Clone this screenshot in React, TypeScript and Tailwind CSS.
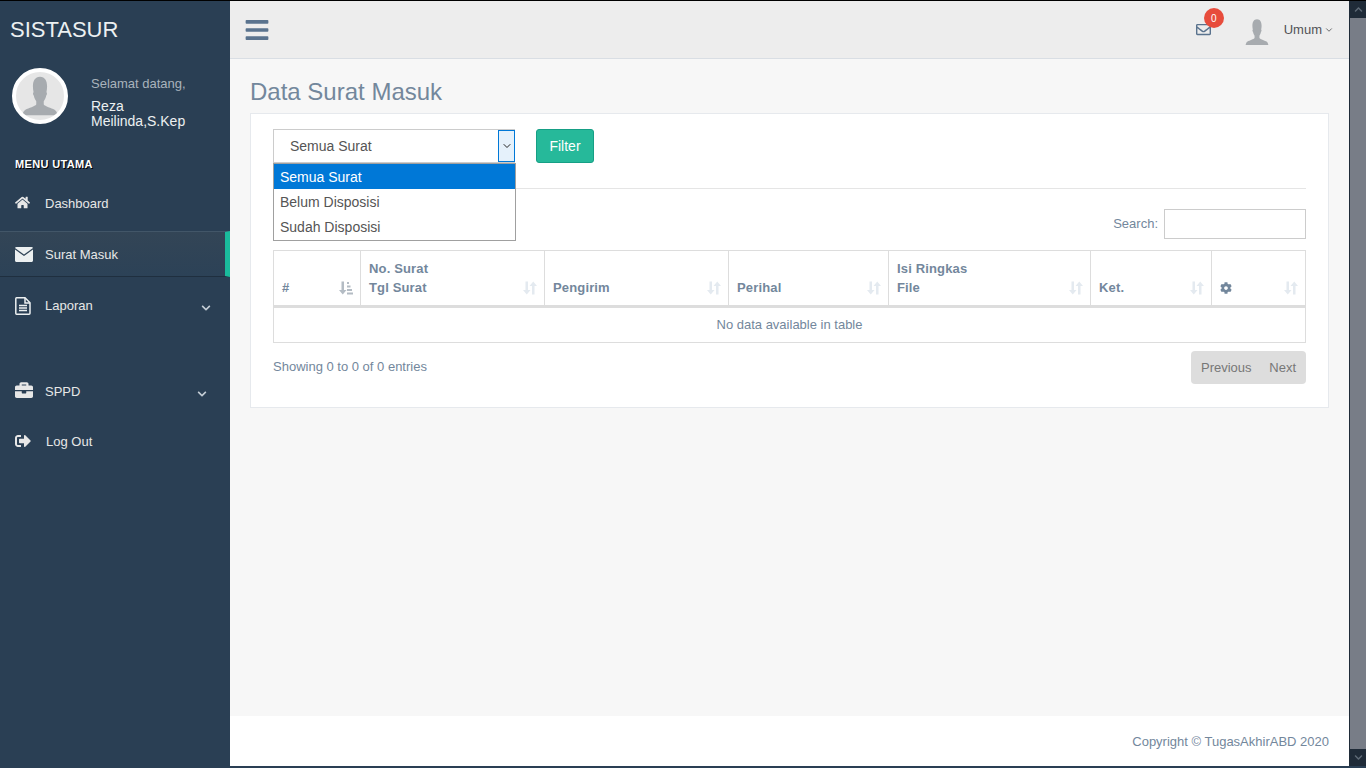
import { ChevronDown } from 'lucide-react';
import {
  FaBars,
  FaBriefcase,
  FaChevronDown,
  FaChevronUp,
  FaCog,
  FaHome,
  FaRegEnvelope,
  FaSignOutAlt,
} from 'react-icons/fa';

const columns = [
  { width: 'w-[87px]', top: '', bottom: '#', active: true },
  { width: 'w-[184px]', top: 'No. Surat', bottom: 'Tgl Surat' },
  { width: 'w-[184px]', top: '', bottom: 'Pengirim' },
  { width: 'w-[160px]', top: '', bottom: 'Perihal' },
  { width: 'w-[202px]', top: 'Isi Ringkas', bottom: 'File' },
  { width: 'w-[121px]', top: '', bottom: 'Ket.' },
  { width: 'flex-1', top: '', bottom: 'gear' },
];

function Avatar({ width, height }: { width: number; height: number }) {
  return (
    <svg width={width} height={height} viewBox="0 0 48 48" preserveAspectRatio="none">
      <path
        d="M24 5c-6 0-8.500 4.500-8.500 10 0 2 .3 4 .8 6-1 .5-.8 2.500.2 3.500.6 2.500 1.800 4.500 3 6v3.500c-1.500 2-9 3.500-13 5.500-2 1-3 3-3.500 5.500h42c-.5-2.500-1.500-4.500-3.500-5.500-4-2-11.500-3.500-13-5.500v-3.500c1.200-1.500 2.400-3.500 3-6 1-1 1.200-3 .2-3.500.5-2 .8-4 .8-6C32.500 9.500 30 5 24 5z"
        fill="#A7ABAF"
      />
    </svg>
  );
}

function SortArrows() {
  return (
    <svg width="14" height="14" viewBox="0 0 14 14" fill="#E4EAF0">
      <path d="M2.500 .5H5v8.500h2.500l-3.750 4.500L0 9h2.500z" />
      <path d="M9 13.500h2.500V5H14L10.250 .5 6.500 5H9z" />
    </svg>
  );
}

function SortActive() {
  return (
    <svg width="14" height="14" viewBox="0 0 14 14" fill="#B4BCC4">
      <path d="M2.500 .5H5v8.500h2.500l-3.750 4.500L0 9h2.500z" />
      <path d="M8 1h2v2H8zM8 4.500h3.500v2H8zM8 8h5v2H8zM8 11.500h6v2H8z" />
    </svg>
  );
}

function MailIcon() {
  return (
    <svg width="18" height="15" viewBox="0 0 18 15" fill="#ECF0F1">
      <path d="M1.500 0h15c.7 0 1.300.4 1.500 1L9 7.500 0 1c.2-.6.8-1 1.500-1z" />
      <path d="M0 2.600l9 6.500 9-6.500V13.500c0 .8-.7 1.500-1.500 1.500h-15C.7 15 0 14.300 0 13.500z" />
    </svg>
  );
}

function FileIcon() {
  return (
    <svg width="16" height="18" viewBox="0 0 16 18" fill="none" stroke="#ECF0F1" strokeWidth="1.500">
      <path d="M1.500 .8h8.500l5 5v10.400c0 .6-.4 1-1 1H1.500c-.4 0-.7-.4-.7-1V1.800c0-.6.3-1 .7-1z" />
      <path d="M10 1v5h5" />
      <path d="M4 8.500h8M4 11h8M4 13.500h8" />
    </svg>
  );
}

function NavItem({
  icon,
  label,
  arrowClass,
  className,
  labelClass,
}: {
  icon: React.ReactNode;
  label: string;
  arrowClass?: string;
  className?: string;
  labelClass?: string;
}) {
  return (
    <div className={`relative flex items-center text-[13px] leading-[20px] text-[#E7E7E7] ${className ?? ''}`}>
      <span className="flex w-[45px] justify-start pl-[15px]">{icon}</span>
      <span className={labelClass}>{label}</span>
      {arrowClass && <FaChevronDown className={`absolute top-[7px] text-[10px] text-[#C4CDD5] ${arrowClass}`} />}
    </div>
  );
}

function Sidebar() {
  return (
    <aside className="flex w-[230px] shrink-0 flex-col bg-[#2A3F54]">
      <div className="pl-[10px] pt-[16px] text-[22px] leading-[26px] text-[#ECF0F1]">SISTASUR</div>

      <div className="mt-[25px] flex pl-[12px]">
        <div className="flex h-[56px] w-[56px] items-end justify-center overflow-hidden rounded-full border-[4px] border-white bg-[#E6E6E6] pb-[2px]">
          <Avatar width={40} height={46} />
        </div>
        <div className="ml-[23px] w-[110px] pt-[8px]">
          <div className="text-[13px] leading-[16px] text-[#A9B3BC]">Selamat datang,</div>
          <div className="mt-[7px] text-[14px] leading-[15px] text-[#ECF0F1]">Reza Meilinda,S.Kep</div>
        </div>
      </div>

      <div className="mt-[27px] pl-[15px] text-[11px] font-bold leading-[16px] tracking-[0.35px] text-white [text-shadow:1px_1px_#000]">
        MENU UTAMA
      </div>

      <NavItem className="mt-[22px]" icon={<FaHome className="mt-[-3px] text-[15px]" />} label="Dashboard" />
      <NavItem
        className="mt-[17px] h-[46px] border-y border-t-[#425668] border-b-[#1F2F3F] border-r-[5px] border-r-[#1ABB9C] bg-gradient-to-b from-[#334556] to-[#2C4257] pt-[2px]"
        icon={<span className="mt-[-2px] flex"><MailIcon /></span>}
        label="Surat Masuk"
      />
      <NavItem
        className="mt-[19px]"
        icon={<span className="mt-[-1px] flex"><FileIcon /></span>}
        label="Laporan"
        arrowClass="left-[201px]"
      />
      <NavItem
        className="mt-[66px]"
        icon={<FaBriefcase className="mt-[-4px] text-[18px]" />}
        label="SPPD"
        arrowClass="left-[197px]"
      />
      <NavItem
        className="mt-[30px]"
        icon={<FaSignOutAlt className="mt-[-3px] text-[16px]" />}
        label="Log Out"
        labelClass="ml-[1px]"
      />
    </aside>
  );
}

function TopBar() {
  return (
    <header className="flex h-[58px] shrink-0 items-center border-b border-[#D9DEE4] bg-[#EDEDED] pl-[14px]">
      <FaBars className="text-[26px] text-[#5A738E]" />
      <div className="ml-auto flex items-center text-[13px] text-[#515356]">
        <span className="relative flex">
          <FaRegEnvelope className="text-[15px] text-[#5A738E]" />
          <span className="absolute left-[8px] top-[-14px] flex h-[20px] w-[20px] items-center justify-center rounded-full bg-[#E74C3C] text-[10px] text-white">
            0
          </span>
        </span>
        <span className="ml-[33px] mt-[4px] flex">
          <Avatar width={26} height={31} />
        </span>
        <span className="ml-[14px] mt-[1px]">Umum</span>
        <ChevronDown size={10} strokeWidth={2} className="ml-[2px] mr-[15px] mt-[1px]" />
      </div>
    </header>
  );
}

function DataTable() {
  return (
    <div className="border border-[#DDDDDD] text-[#73879C]">
      <div className="flex h-[57px] border-b-[3px] border-[#DDDDDD]">
        {columns.map((col, i) => (
          <div
            key={i}
            className={`flex items-end justify-between pb-[8px] pl-[8px] pr-[7px] text-[13px] font-bold leading-[19px] tracking-[0.15px] ${col.width} ${
              i < columns.length - 1 ? 'border-r border-[#DDDDDD]' : ''
            }`}
          >
            <span>
              {col.top && <span className="block">{col.top}</span>}
              {col.bottom === 'gear' ? <FaCog className="mb-[3px] text-[12px]" /> : col.bottom}
            </span>
            <span className="mb-[2px]">{col.active ? <SortActive /> : <SortArrows />}</span>
          </div>
        ))}
      </div>
      <div className="flex h-[34px] items-center justify-center text-[13px]">No data available in table</div>
    </div>
  );
}

function Panel() {
  return (
    <section className="relative mt-[8px] h-[295px] border border-[#E6E9ED] bg-white px-[22px] pt-[15px]">
      <div className="flex items-start">
        <div className="flex h-[34px] w-[242px] items-center border border-[#CCCCCC] pl-[16px] text-[14px] text-[#555555]">
          <span>Semua Surat</span>
          <span className="ml-auto mr-[-1px] flex h-[32px] w-[17px] items-center justify-center border border-[#0078D7] bg-[#E5F1FB]">
            <ChevronDown size={12} strokeWidth={2} className="text-[#222222]" />
          </span>
        </div>
        <button className="ml-[21px] h-[34px] w-[58px] rounded-[3px] border border-[#169F85] bg-[#26B99A] text-[14px] text-white">
          Filter
        </button>
      </div>

      <div className="absolute left-[22px] top-[49px] w-[243px] border border-[#A0A0A0] bg-white pb-[1px] text-[14px] leading-[24px] text-[#555555]">
        <div className="bg-[#0078D7] pl-[6px] pt-[1px] text-white">Semua Surat</div>
        <div className="pl-[6px] pt-[1px]">Belum Disposisi</div>
        <div className="pl-[6px] pt-[1px]">Sudah Disposisi</div>
      </div>

      <div className="mt-[25px] border-t border-[#E5E5E5]" />

      <div className="mt-[20px] flex items-center justify-end text-[13px] text-[#73879C]">
        <span className="mr-[6px]">Search:</span>
        <input className="h-[30px] w-[142px] border border-[#CCCCCC] bg-white" />
      </div>

      <div className="mt-[11px]">
        <DataTable />
      </div>

      <div className="mt-[8px] flex items-start justify-between text-[13px]">
        <span className="mt-[7px] leading-[18px] text-[#73879C]">Showing 0 to 0 of 0 entries</span>
        <div className="flex h-[33px] w-[115px] items-center justify-between rounded-[4px] bg-[#DDDDDD] px-[10px] text-[#777777]">
          <span>Previous</span>
          <span>Next</span>
        </div>
      </div>
    </section>
  );
}

function Scrollbar() {
  return (
    <div className="flex w-[17px] shrink-0 flex-col border-l border-[#1F2B38] bg-[#787D87]">
      <div className="flex h-[17px] items-center justify-center bg-[#1F2B38]">
        <FaChevronUp className="text-[9px] text-[#5E6A76]" />
      </div>
      <div className="mt-auto flex h-[17px] items-center justify-center bg-[#1F2B38]">
        <FaChevronDown className="text-[9px] text-[#5E6A76]" />
      </div>
    </div>
  );
}

export default function App() {
  return (
    <div className="flex h-screen w-full flex-col overflow-hidden bg-[#2A3F54] font-['Liberation_Sans',Arial,sans-serif]">
      <div className="h-[1px] shrink-0 bg-black" />
      <div className="flex min-h-0 flex-1">
        <Sidebar />
        <main className="flex min-w-0 flex-1 flex-col bg-[#F7F7F7]">
          <TopBar />
          <div className="flex-1 px-[20px] pt-[20px]">
            <h1 className="text-[24px] font-normal leading-[26px] text-[#73879C]">Data Surat Masuk</h1>
            <Panel />
          </div>
          <footer className="flex h-[50px] shrink-0 items-center justify-end bg-white pr-[20px] pt-[2px] text-[13px] text-[#73879C]">
            Copyright © TugasAkhirABD 2020
          </footer>
        </main>
        <Scrollbar />
      </div>
      <div className="h-[2px] shrink-0 bg-[#2A3F54]" />
    </div>
  );
}
